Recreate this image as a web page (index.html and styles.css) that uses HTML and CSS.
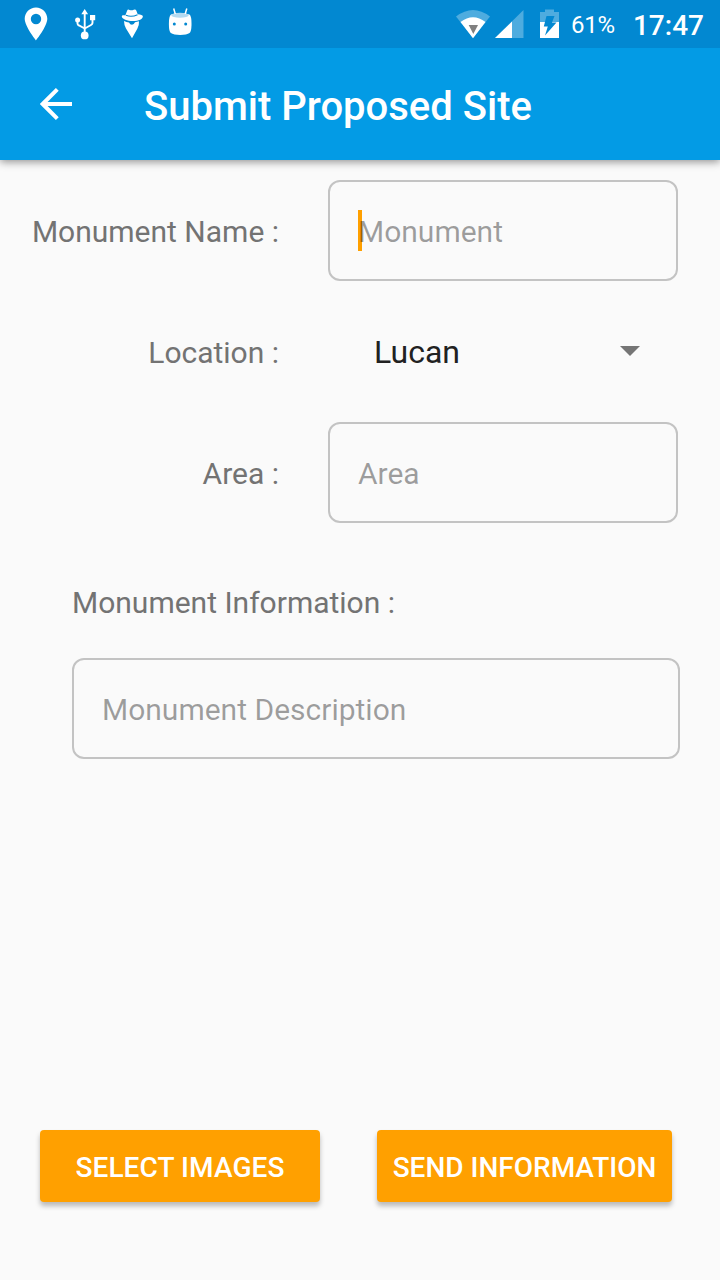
FILE: index.html
```html
<!DOCTYPE html>
<html lang="en">
<head>
<meta charset="utf-8">
<title>Submit Proposed Site</title>
<link rel="stylesheet" href="styles.css">
</head>
<body>
<div class="screen">
  <header class="header">
    <div class="status-bar">
      <svg class="status-icons" width="210" height="48" viewBox="0 0 210 48" fill="#fff">
        <path fill-rule="evenodd" d="M36 7.500c-6.300 0-11.300 5-11.300 11.300 0 7.500 11.300 21.700 11.300 21.700s11.300-14.200 11.300-21.700c0-6.300-5-11.300-11.300-11.300zM36 13.800a5.200 5.200 0 1 1 0 10.400 5.200 5.200 0 0 1 0-10.400z"/>
        <path d="M84.700 12v22M77.500 20v3.500q0 1.500 1.500 2l5.700 3 6.300-3.500q1.500-.8 1.500-2V18" fill="none" stroke="#fff" stroke-width="1.900"/>
        <path d="M84.700 9l3.400 5.200h-6.800zM90 15h5.200v5.200H90z"/>
        <circle cx="77.600" cy="20" r="2.500"/><circle cx="84.700" cy="35.400" r="3.900"/>
        <path d="M125.300 15.500l1.700-4.500q.7-2 2.500-1.100 2 1 4.200-.2 1.900-.9 2.700 1l1.300 3.500q4.800.4 5.100 1.800c.6 3-4.300 5-9.800 5-5.800 0-11-2-11.200-4.500-.1-1.200 1.600-1.500 3.500-1z"/>
        <path d="M126 15.300q5.500 2.200 11.500-.6" fill="none" stroke="#0288d1" stroke-width="1.100"/>
        <path d="M124 21q2.500 1.200 5 1.500 1 2.200 3 2.200t3-2.400l4-1q.3 4.700-1.700 7.500L132 38.300 126 28.500q-2-3.500-2-7.500z"/>
        <path d="M171 14.500q9-3 18.500 0c1.500 1.500 2 4 2 9 0 5.500-.5 8-2 9.500-2.800 2.600-15.800 2.600-18.600 0-1.500-1.500-2-4-2-9.500 0-5 .6-7.500 2.100-9z"/>
        <ellipse cx="180" cy="15.200" rx="8.700" ry="2.500" fill="#b3daf1"/>
        <path d="M175.300 14l-1.600-5.500M185.200 14l1.600-5.500" fill="none" stroke="#fff" stroke-width="1.500"/>
        <circle cx="174.300" cy="24" r="1.500" fill="#0288d1"/><circle cx="185.700" cy="24" r="1.500" fill="#0288d1"/>
      </svg>
      <svg class="status-icons" width="105" height="48" viewBox="455 0 105 48" fill="#fff">
        <path opacity=".3" d="M473 38L456 16.500Q473 3.500 490 16.500z"/>
        <path d="M473 38.200L460.500 22Q473 12.500 485.500 22z"/>
        <path fill="#808080" d="M468.700 25h9.300l-4.700 9z"/>
        <path opacity=".3" d="M495 38L523.500 10v28z"/>
        <path d="M495 38l17-16.500V38z"/>
        <path opacity=".3" d="M540 12h5V9.500h9V12h5v10h-19z"/>
        <path d="M540 22h19v16h-19z"/>
        <path fill="#0288d1" d="M546.500 16h8l-2.500 6.500h4.500L545 35.500l2.800-9h-4z"/>
      </svg>
      <span class="battery">61%</span>
      <span class="clock">17:47</span>
    </div>
    <div class="toolbar">
      <svg class="back" width="32" height="32" viewBox="0 0 32 32" fill="none" stroke="#fff" stroke-width="4"><path d="M32 16H4M17.300 1.400L2.700 16l14.600 14.600"/></svg>
      <h1 class="title">Submit Proposed Site</h1>
    </div>
  </header>
  <main class="form">
    <div class="row">
      <span class="label">Monument Name :</span>
      <div class="field"><span class="caret"></span><span class="hint">Monument</span></div>
    </div>
    <div class="row row-select">
      <span class="label">Location :</span>
      <div class="select"><span>Lucan</span><svg class="arrow" width="20" height="10" viewBox="0 0 20 10"><path d="M0 0h20L10 10z" fill="#757575"/></svg></div>
    </div>
    <div class="row">
      <span class="label">Area :</span>
      <div class="field"><span class="hint">Area</span></div>
    </div>
    <section class="info">
      <span class="info-label">Monument Information :</span>
      <div class="field field-wide"><span class="hint">Monument Description</span></div>
    </section>
  </main>
  <footer class="actions">
    <button class="button button-select">SELECT IMAGES</button>
    <button class="button button-send">SEND INFORMATION</button>
  </footer>
</div>
</body>
</html>
```
FILE: styles.css
```css
* { box-sizing: border-box; }
body { margin: 0; background: #fafafa; font-family: Roboto, sans-serif; }
.screen { width: 720px; height: 1280px; display: flex; flex-direction: column; overflow: hidden; }
.header { background: #039be5; box-shadow: 0 2px 8px rgba(0,0,0,.42); }
.status-bar { height: 48px; display: flex; align-items: center; background: #0288d1; color: #fff; padding-right: 16px; }
.status-icons { display: block; flex: none; }
.status-icons + .status-icons { margin-left: 245px; }
.battery { margin-left: 11px; font-size: 24px; line-height: 48px; padding-top: 2px; letter-spacing: -.3px; }
.clock { margin-left: auto; font-size: 28px; font-weight: 500; line-height: 48px; padding-top: 4px; }
.toolbar { height: 112px; display: flex; align-items: center; padding-left: 40px; }
.back { display: block; }
.title { margin: 6px 0 0 72px; font-size: 40px; font-weight: 500; line-height: 48px; color: #fff; }
.form { flex: 1; padding-top: 20px; font-size: 30px; color: #737373; }
.row { display: flex; align-items: center; gap: 49px; height: 101px; }
.row-select { margin: 20px 0; }
.label { width: 279px; text-align: right; white-space: nowrap; line-height: 36px; padding-top: 2px; }
.field { position: relative; display: flex; align-items: center; width: 350px; height: 101px; padding-left: 28px; border: 2px solid #c3c3c3; border-radius: 12px; }
.field-wide { width: 608px; }
.hint { position: relative; color: rgba(0,0,0,.38); line-height: 36px; padding-top: 2px; }
.caret { position: absolute; left: 28px; top: 28px; width: 4px; height: 41px; background: #ffa000; }
.select { display: flex; align-items: center; justify-content: space-between; width: 312px; padding-left: 46px; font-size: 32px; color: #212121; line-height: 38px; }
.arrow { margin-bottom: 2px; }
.info { padding: 61px 0 0 72px; }
.info-label { display: block; height: 74px; line-height: 38px; }
.actions { display: flex; gap: 57px; padding: 0 48px 78px 40px; }
.button { height: 72px; padding: 2px 0 0; border: 0; border-radius: 4px; background: #ffa000; color: #fff; font-family: inherit; font-size: 28px; font-weight: 500; box-shadow: 0 4px 5px rgba(0,0,0,.26); white-space: nowrap; }
.button-select { width: 280px; letter-spacing: .1px; }
.button-send { width: 295px; }
```
